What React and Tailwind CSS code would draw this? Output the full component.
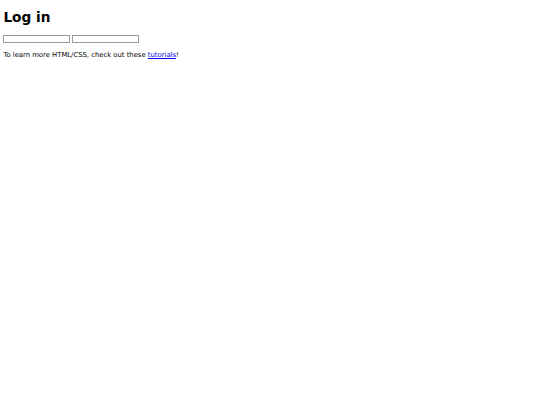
import React from "react";

const App = () => {
  return (
    <div className="min-h-screen bg-white px-[3.4px] pt-[10px] text-black font-['DejaVu_Sans',sans-serif]">
      <h1 className="text-[13.66px] font-bold leading-[15.9px]">Log in</h1>

      {/* login fields */}
      <form className="mt-[8.3px] flex gap-[1.7px] pt-[1.1px] pb-[0.9px]">
        <input
          type="text"
          className="h-[8px] w-[67px] border border-[#9a9a9a] bg-white"
        />
        <input
          type="password"
          className="h-[8px] w-[67px] border border-[#9a9a9a] bg-white"
        />
      </form>

      <p className="mt-[8px] text-[6.83px] leading-[7.95px]">
        To learn more HTML/CSS, check out these{" "}
        <a href="#" className="text-[#0000ee] underline">
          tutorials
        </a>
        !
      </p>
    </div>
  );
};

export default App;
